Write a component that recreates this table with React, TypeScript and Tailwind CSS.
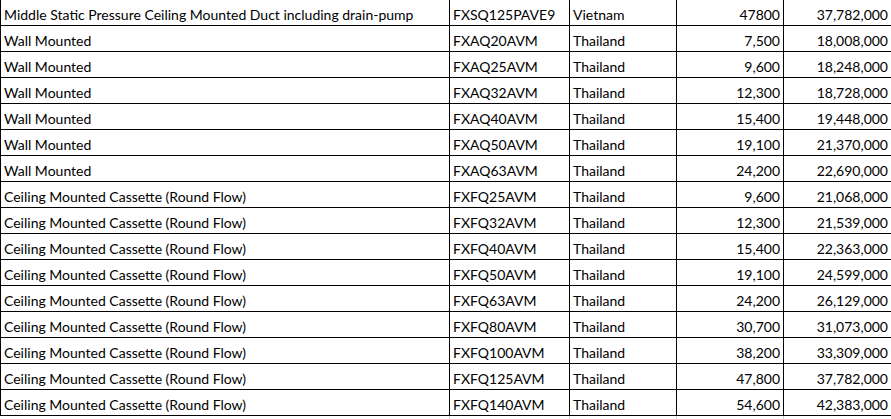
type Row = { name: string; model: string; origin: string; qty: string; price: string };

const ROWS: Row[] = [
  { name: "Middle Static Pressure Ceiling Mounted Duct including drain-pump", model: "FXSQ125PAVE9", origin: "Vietnam", qty: "47800", price: "37,782,000" },
  { name: "Wall Mounted", model: "FXAQ20AVM", origin: "Thailand", qty: "7,500", price: "18,008,000" },
  { name: "Wall Mounted", model: "FXAQ25AVM", origin: "Thailand", qty: "9,600", price: "18,248,000" },
  { name: "Wall Mounted", model: "FXAQ32AVM", origin: "Thailand", qty: "12,300", price: "18,728,000" },
  { name: "Wall Mounted", model: "FXAQ40AVM", origin: "Thailand", qty: "15,400", price: "19,448,000" },
  { name: "Wall Mounted", model: "FXAQ50AVM", origin: "Thailand", qty: "19,100", price: "21,370,000" },
  { name: "Wall Mounted", model: "FXAQ63AVM", origin: "Thailand", qty: "24,200", price: "22,690,000" },
  { name: "Ceiling Mounted Cassette (Round Flow)", model: "FXFQ25AVM", origin: "Thailand", qty: "9,600", price: "21,068,000" },
  { name: "Ceiling Mounted Cassette (Round Flow)", model: "FXFQ32AVM", origin: "Thailand", qty: "12,300", price: "21,539,000" },
  { name: "Ceiling Mounted Cassette (Round Flow)", model: "FXFQ40AVM", origin: "Thailand", qty: "15,400", price: "22,363,000" },
  { name: "Ceiling Mounted Cassette (Round Flow)", model: "FXFQ50AVM", origin: "Thailand", qty: "19,100", price: "24,599,000" },
  { name: "Ceiling Mounted Cassette (Round Flow)", model: "FXFQ63AVM", origin: "Thailand", qty: "24,200", price: "26,129,000" },
  { name: "Ceiling Mounted Cassette (Round Flow)", model: "FXFQ80AVM", origin: "Thailand", qty: "30,700", price: "31,073,000" },
  { name: "Ceiling Mounted Cassette (Round Flow)", model: "FXFQ100AVM", origin: "Thailand", qty: "38,200", price: "33,309,000" },
  { name: "Ceiling Mounted Cassette (Round Flow)", model: "FXFQ125AVM", origin: "Thailand", qty: "47,800", price: "37,782,000" },
  { name: "Ceiling Mounted Cassette (Round Flow)", model: "FXFQ140AVM", origin: "Thailand", qty: "54,600", price: "42,383,000" },
];

const cell = "h-full flex items-end pb-[1px] px-[3px] border-r border-black whitespace-nowrap overflow-hidden";

export default function App() {
  return (
    <div className="w-[891px] h-[419px] overflow-hidden bg-white text-black font-['Lato',sans-serif] text-[14px] leading-[18px]">
      <div className="w-[892px]">
        {ROWS.map((r, i) => (
          <div key={i} className="flex h-[26px] border-l border-b border-black">
            <div className={`${cell} w-[449px]`}>{r.name}</div>
            <div className={`${cell} w-[120px]`}>{r.model}</div>
            <div className={`${cell} w-[107px]`}>{r.origin}</div>
            <div className={`${cell} w-[107px] justify-end`}>{r.qty}</div>
            <div className={`${cell} w-[108px] justify-end`}>{r.price}</div>
          </div>
        ))}
        {/* faint sheet gridlines under the last bordered row */}
        <div className="flex h-[4px]">
          <div className="w-[450px] h-full border-r border-[#d4d4d4]" />
          <div className="w-[120px] h-full border-r border-[#d4d4d4]" />
          <div className="w-[107px] h-full border-r border-[#d4d4d4]" />
          <div className="w-[107px] h-full border-r border-[#d4d4d4]" />
        </div>
      </div>
    </div>
  );
}
